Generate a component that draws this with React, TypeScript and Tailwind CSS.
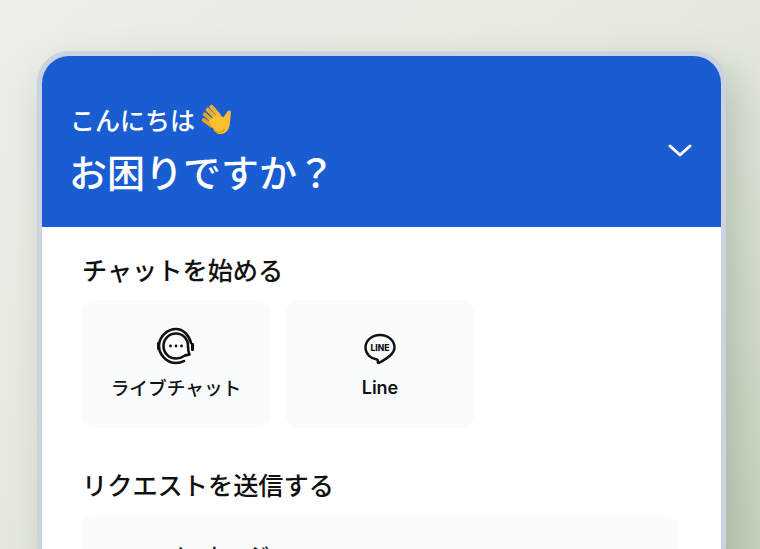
const jp = { fontFamily: '"Noto Sans CJK JP", "Noto Sans", sans-serif' }

function WaveHand() {
    return (
        <svg width="32" height="32" viewBox="0 0 34 34" fill="none">
            <path d="M3 11l9 8M2 17l8 6" stroke="#e6a51f" strokeWidth="4.200" strokeLinecap="round" />
            <path d="M6 6l9 9" stroke="#eeae2a" strokeWidth="4.200" strokeLinecap="round" />
            <path d="M10 3l8 9" stroke="#f2b632" strokeWidth="4.200" strokeLinecap="round" />
            <path d="M10 23l-3-5 9-7 7 3 4-6c1.500-2 4-1 3.600 1.200C30.500 13 30 17 29.500 21c-.500 6-4 11-10 11-4.500 0-7-5-9.500-9z" fill="#fbc02d" />
            <path d="M13 28c2 2.500 8 3 11-1" stroke="#e39a16" strokeWidth="1.600" strokeLinecap="round" />
        </svg>
    )
}

function ChatIcon() {
    return (
        <svg width="40" height="40" viewBox="0 0 40 40" fill="none" stroke="#111" strokeWidth="2.600">
            <path d="M35 17C33 9 27 3 20 3 11 3 3 11 3 20s8 17 17 17c3 0 6-.800 8-2" strokeLinecap="round" />
            <path d="M28 30c-2 1.500-5 2.500-8 2.500C13 32.500 7.500 27 7.500 20S13 7.500 20 7.500 32 13 32 20c0 3 .300 6 1.500 8.500-2 .500-4 .500-5.500 1.500z" strokeLinejoin="round" />
            <rect x="1" y="16" width="3" height="8" rx="1" fill="#111" stroke="none" />
            <rect x="35" y="17" width="3" height="8" rx="1" fill="#111" stroke="none" />
            <circle cx="14.500" cy="20" r="1.400" fill="#111" stroke="none" />
            <circle cx="20" cy="20" r="1.400" fill="#111" stroke="none" />
            <circle cx="25.500" cy="20" r="1.400" fill="#111" stroke="none" />
        </svg>
    )
}

function LineIcon() {
    return (
        <svg width="34" height="34" viewBox="0 0 34 34" fill="none">
            <path d="M17 3C9 3 2.500 8.300 2.500 15.500c0 6.500 5 11 11.500 12 1 .200 1 1 .800 2.500-.100 1 .500 1.300 1.400.800C21 28 31.500 23 31.500 15.500 31.500 8.300 25 3 17 3z" stroke="#111" strokeWidth="2.400" strokeLinejoin="round" />
            <text x="17" y="18.800" textAnchor="middle" fontSize="8.500" fontWeight="800" fill="#111" fontFamily="Inter, sans-serif">LINE</text>
        </svg>
    )
}

function ChannelCard({ icon, label, latin }: { icon: React.ReactNode, label: string, latin?: boolean }) {
    return (
        <div className="w-[190px] h-[128px] rounded-[14px] bg-[#f9fbfc] flex flex-col items-center pt-[26px]">
            <div className="h-[40px] flex items-center justify-center">{icon}</div>
            <span
                className={`text-[#111] leading-[26px] ${latin ? "mt-[9px] text-[18px] font-semibold" : "mt-[8px] text-[18.700px] font-medium"}`}
                style={latin ? { fontFamily: "Inter, sans-serif" } : undefined}
            >
                {label}
            </span>
        </div>
    )
}

function App() {
    return (
        <div
            className="w-[760px] h-[549px] overflow-hidden bg-gradient-to-br from-[#eceee9] via-[#e4e9de] to-[#c6d1bc] pt-[51px] pl-[37px]"
            style={jp}
        >
            <div className="w-[689px] h-[560px] rounded-t-[32px] border-[5px] border-[#ccd2e0] bg-white overflow-hidden shadow-[10px_16px_36px_rgba(110,130,105,0.35)]">
                <div className="h-[171px] bg-[#1a5cd1] text-white pl-[28px] pr-[27px] flex justify-between items-start">
                    <div className="pt-[43px]">
                        <div className="flex items-center text-[25px] leading-[40px] font-medium">
                            こんにちは
                            <span className="ml-[7px] mt-[1px]"><WaveHand /></span>
                        </div>
                        <div className="text-[38px] leading-[50px] mt-[7px] -ml-[1px] font-medium">お困りですか？</div>
                    </div>
                    <svg className="mt-[85px]" width="28" height="20" viewBox="0 0 28 20" fill="none">
                        <path d="M4 5l10 9 10-9" stroke="#fff" strokeWidth="3" strokeLinecap="round" strokeLinejoin="round" />
                    </svg>
                </div>
                <div className="pl-[39px] pr-[43px] pt-[23px]">
                    <h2 className="text-[25.200px] leading-[38px] font-medium text-[#111] pl-[1px]">チャットを始める</h2>
                    <div className="flex gap-[14px] mt-[12px]">
                        <ChannelCard icon={<ChatIcon />} label="ライブチャット" />
                        <ChannelCard icon={<div className="mt-[6px]"><LineIcon /></div>} label="Line" latin />
                    </div>
                    <h2 className="text-[25.200px] leading-[38px] font-medium text-[#111] mt-[37px] pl-[1px]">リクエストを送信する</h2>
                    <div className="mt-[12px] h-[120px] rounded-[14px] bg-[#f9fbfc] pt-[24px] pl-[84px]">
                        <span className="text-[21px] text-[#111] leading-[30px] font-medium">メッセージ</span>
                    </div>
                </div>
            </div>
        </div>
    )
}

export default App
